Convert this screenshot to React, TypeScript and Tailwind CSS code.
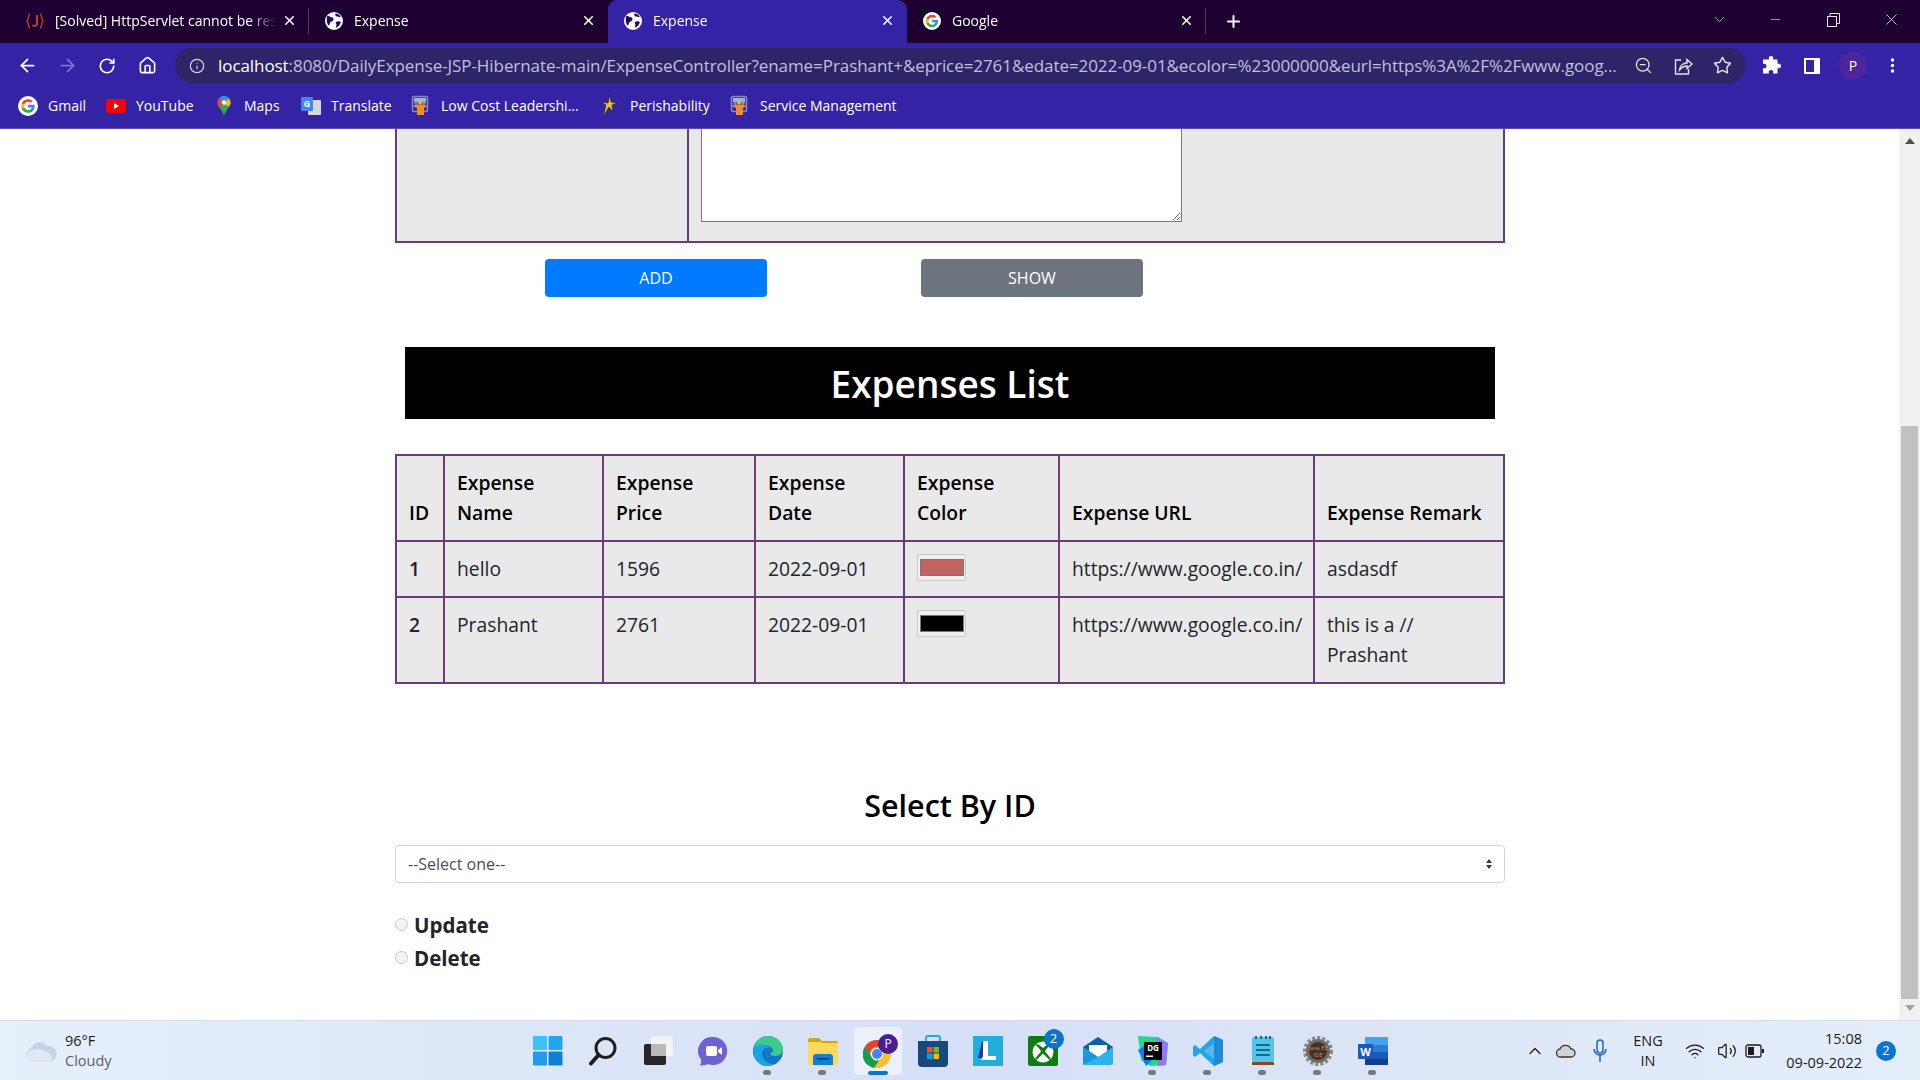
import { ArrowLeft, ArrowRight, ChevronDown, ChevronUp, Home, Info, Minus, MoreVertical, Plus, RotateCw, Star, Volume2, Wifi, X, ZoomOut } from "lucide-react";
import type { ReactNode } from "react";

const GoogleG = ({ size = 20 }: { size?: number }) => (
  <svg width={size} height={size} viewBox="0 0 24 24" className="shrink-0">
    <circle cx="12" cy="12" r="12" fill="#fff" />
    <path d="M20 12.2c0-.6-.05-1.1-.15-1.6H12v3.1h4.5c-.2 1-.8 1.9-1.7 2.5v2h2.7c1.6-1.5 2.5-3.6 2.5-6z" fill="#4285F4" />
    <path d="M12 20.2c2.2 0 4.1-.7 5.5-2l-2.7-2c-.8.5-1.7.8-2.8.8-2.1 0-3.9-1.4-4.6-3.4H4.6v2.1C6 18.5 8.8 20.2 12 20.2z" fill="#34A853" />
    <path d="M7.4 13.6c-.35-1-.35-2.2 0-3.2V8.3H4.6c-1 1.9-1 5.5 0 7.4z" fill="#FBBC05" />
    <path d="M12 7c1.2 0 2.3.4 3.1 1.2l2.4-2.4C16.1 4.5 14.2 3.8 12 3.8c-3.2 0-6 1.8-7.4 4.5l2.8 2.1C8.1 8.4 9.900 7 12 7z" fill="#EA4335" />
  </svg>
);

const Globe = () => (
  <svg width="18" height="18" viewBox="0 0 24 24" className="shrink-0">
    <circle cx="12" cy="12" r="12" fill="#fff" />
    <path d="M3 5c3 0 4 2 6 2s3 2 2 4-3 1-4 3-1 4-2 4-4-6-2-13zM14 2c3 0 6 2 7 4-2 2-3 0-5 0s-3-3-2-4zM15 13c2-1 5-1 6 0 0 3-3 7-6 8-1-2 1-3 0-5s-1-2 0-3z" fill="#1f0b52" />
  </svg>
);

const JFavicon = () => (
  <svg width="18" height="18" viewBox="0 0 18 18" className="shrink-0" fill="none" stroke="#c0392b" strokeWidth="1.4">
    <path d="M4 2C2 2 3 7 1 9c2 2 1 7 3 7M14 2c2 0 1 5 3 7-2 2-1 7-3 7" />
    <path d="M11 3v9c0 2-3 2.500-4.500 1" strokeWidth="2" />
  </svg>
);

const PersonBadge = () => (
  <svg width="18" height="22" viewBox="0 0 18 22" className="shrink-0">
    <rect x="1.500" y="1.500" width="15" height="15" rx="1.500" fill="none" stroke="#7f8fc0" strokeWidth="1.500" />
    <rect x="3" y="3" width="12" height="4" fill="#9db4dd" />
    <circle cx="5" cy="8" r="1.700" fill="#3d9be9" />
    <circle cx="13" cy="8" r="1.700" fill="#6cc04a" />
    <path d="M1.500 11l3.500-1.500h8L16.500 11l-3.500 2v7H6v-7z" fill="#f28c28" />
    <circle cx="9" cy="7.500" r="2" fill="#f5b041" />
  </svg>
);

const tabs = [
  { title: "[Solved] HttpServlet cannot be resolved", icon: <JFavicon />, active: false, sep: true, cls: "w-[299px]" },
  { title: "Expense", icon: <Globe />, active: false, sep: false, cls: "w-[299px]" },
  { title: "Expense", icon: <Globe />, active: true, sep: false, cls: "w-[299px]" },
  { title: "Google", icon: <GoogleG size={18} />, active: false, sep: true, cls: "w-[299px]" },
];

const bookmarks: { label: string; cls: string; icon: ReactNode }[] = [
  { label: "Gmail", cls: "w-[88px] gap-[10px]", icon: <GoogleG size={20} /> },
  {
    label: "YouTube",
    cls: "w-[108px] gap-[10px]",
    icon: (
      <svg width="20" height="14" viewBox="0 0 20 14" className="shrink-0">
        <rect width="20" height="14" rx="3" fill="#f00" />
        <path d="M8 4l5 3-5 3z" fill="#fff" />
      </svg>
    ),
  },
  {
    label: "Maps",
    cls: "w-[87px] gap-[10px]",
    icon: (
      <svg width="20" height="20" viewBox="0 0 20 20" className="shrink-0">
        <path d="M10 0a6.500 6.500 0 0 1 6.500 6.500c0 4-4.500 7-6.500 13.500C8 13.500 3.500 10.500 3.500 6.500A6.500 6.500 0 0 1 10 0z" fill="#34a853" />
        <path d="M10 0c2 0 3.700.9 4.900 2.300L10 8 5.200 2.200A6.500 6.500 0 0 1 10 0z" fill="#4285f4" />
        <path d="M5.200 2.200L10 8l-5.600 2.500C3.800 9.400 3.500 8 3.500 6.500c0-1.700.6-3.200 1.700-4.300z" fill="#ea4335" />
        <path d="M14.900 2.300a6.500 6.500 0 0 1 1.600 4.200c0 1.400-.5 2.700-1.300 4L10 8z" fill="#fbbc05" />
        <circle cx="10" cy="6.500" r="2.300" fill="#fff" />
      </svg>
    ),
  },
  {
    label: "Translate",
    cls: "w-[108px] gap-[10px]",
    icon: (
      <svg width="20" height="20" viewBox="0 0 20 20" className="shrink-0">
        <rect x="7" y="4" width="13" height="15" rx="1" fill="#d8d8d8" />
        <rect x="0" y="1" width="12" height="14" rx="1" fill="#4285f4" />
        <text x="6" y="11" fontSize="9" fontWeight="700" fill="#fff" textAnchor="middle">G</text>
      </svg>
    ),
  },
  { label: "Low Cost Leadershi...", cls: "w-[189px] gap-[12px] pl-[2px]", icon: <PersonBadge /> },
  {
    label: "Perishability",
    cls: "w-[130px] gap-[12px] pl-[2px]",
    icon: (
      <svg width="18" height="22" viewBox="0 0 18 22" className="shrink-0">
        <path d="M10 0l1 7 6 1-5 2 1 7-4-5-6 10 3-12-5-3 7 1z" fill="#e8c12f" stroke="#1b1b1b" strokeWidth=".6" />
      </svg>
    ),
  },
  { label: "Service Management", cls: "w-[180px] gap-[12px] pl-[2px]", icon: <PersonBadge /> },
];

const apps: { key: string; dot: boolean; icon: ReactNode; active?: boolean }[] = [
  {
    key: "start",
    dot: false,
    icon: (
      <svg width="30" height="30" viewBox="0 0 30 30">
        <rect x="0" y="0" width="14" height="14" rx="1" fill="#3cc2f5" />
        <rect x="15.500" y="0" width="14" height="14" rx="1" fill="#22a7ee" />
        <rect x="0" y="15.500" width="14" height="14" rx="1" fill="#1f9de8" />
        <rect x="15.500" y="15.500" width="14" height="14" rx="1" fill="#0f7fd6" />
      </svg>
    ),
  },
  {
    key: "search",
    dot: false,
    icon: (
      <svg width="30" height="30" viewBox="0 0 30 30" fill="none" stroke="#1f1f1f">
        <circle cx="17.500" cy="12" r="9.500" strokeWidth="3" />
        <path d="M10.500 19L3 27.500" strokeWidth="4" strokeLinecap="round" />
      </svg>
    ),
  },
  {
    key: "view",
    dot: false,
    icon: (
      <svg width="30" height="30" viewBox="0 0 30 30">
        <rect x="1" y="8" width="22" height="21" rx="2" fill="#262626" />
        <rect x="8" y="0" width="22" height="20" rx="2" fill="#f4f4f4" fillOpacity=".9" />
        <rect x="8" y="8" width="15" height="12" fill="#b9b9b9" />
      </svg>
    ),
  },
  {
    key: "chat",
    dot: false,
    icon: (
      <svg width="30" height="30" viewBox="0 0 30 30">
        <path d="M15 1a14 14 0 1 1-5 27c-2 1.500-5 1.500-8 1.500 1-1.500 1.500-3 1-6A14 14 0 0 1 15 1z" fill="#6d62cf" />
        <rect x="8" y="10" width="11" height="10" rx="2" fill="#fff" />
        <path d="M20 14l4-3v8l-4-3z" fill="#fff" />
      </svg>
    ),
  },
  {
    key: "edge",
    dot: true,
    icon: (
      <svg width="30" height="30" viewBox="0 0 30 30">
        <circle cx="15" cy="15" r="15" fill="#0f78c9" />
        <path d="M1 12C3 4 9 0 15 0c9 0 15 7 15 13 0 5-4 7-8 7-3 0-5-1-5-3 3 0 4-2 2-5-3-4-12-4-18 0z" fill="#3ccb8b" />
        <path d="M1 12c5-5 13-4 16 0-3-1-8 0-8 6 0 5 5 10 12 10-3 2-6 2-8 2C6 30 0 22 1 12z" fill="#1aa4e3" />
      </svg>
    ),
  },
  {
    key: "files",
    dot: true,
    icon: (
      <svg width="30" height="28" viewBox="0 0 30 28">
        <path d="M0 3a2 2 0 0 1 2-2h9l3 3h14a2 2 0 0 1 2 2v4H0z" fill="#d8a312" />
        <path d="M0 5h12l3 1h15v20a2 2 0 0 1-2 2H2a2 2 0 0 1-2-2z" fill="#ffd95c" />
        <path d="M5 28v-8a3 3 0 0 1 3-3h14a3 3 0 0 1 3 3v8z" fill="#0f7fd6" />
        <rect x="9" y="21" width="12" height="1.500" fill="#063e73" />
      </svg>
    ),
  },
  {
    key: "chrome",
    dot: false,
    active: true,
    icon: (
      <svg width="36" height="36" viewBox="0 0 36 36" className="relative ml-[6px]">
        <circle cx="14" cy="21" r="14" fill="#fbc02d" />
        <path d="M14 7a14 14 0 0 1 12 7H14a7 7 0 0 0-6.500 9.500L2 13.500A14 14 0 0 1 14 7z" fill="#db4437" />
        <path d="M2 13.500l6 10a7 7 0 0 0 8 4L11 35A14 14 0 0 1 2 13.500z" fill="#0f9d58" />
        <circle cx="14" cy="21" r="6" fill="#fff" />
        <circle cx="14" cy="21" r="5" fill="#4285f4" />
        <circle cx="25" cy="11" r="10" fill="#48208f" />
        <text x="25" y="15" fontSize="12" fill="#fff" textAnchor="middle" fontFamily="Open Sans">P</text>
      </svg>
    ),
  },
  {
    key: "store",
    dot: false,
    icon: (
      <svg width="30" height="32" viewBox="0 0 30 32">
        <path d="M8 6V3a2 2 0 0 1 2-2h10a2 2 0 0 1 2 2v3" fill="none" stroke="#2aa4e8" strokeWidth="2" />
        <path d="M0 6h30v22a4 4 0 0 1-4 4H4a4 4 0 0 1-4-4z" fill="#17497e" />
        <rect x="9" y="12" width="5.500" height="5.500" fill="#f25022" />
        <rect x="15.500" y="12" width="5.500" height="5.500" fill="#7fba00" />
        <rect x="9" y="18.500" width="5.500" height="5.500" fill="#00a4ef" />
        <rect x="15.500" y="18.500" width="5.500" height="5.500" fill="#ffb900" />
      </svg>
    ),
  },
  {
    key: "l",
    dot: false,
    icon: (
      <svg width="30" height="30" viewBox="0 0 30 30">
        <rect width="30" height="30" fill="#22aeda" />
        <path d="M9 5h5l-4 17h-5z" fill="#1a3d9c" />
        <path d="M10 5h5v15h8v4H8l2-4z" fill="#fff" />
      </svg>
    ),
  },
  {
    key: "xbox",
    dot: false,
    icon: (
      <div className="relative h-[30px] w-[30px]">
        <svg width="30" height="30" viewBox="0 0 30 30">
          <rect width="30" height="30" rx="2" fill="#107c10" />
          <circle cx="15" cy="16" r="10.500" fill="#fff" />
          <path d="M15 12c-3-3-6-4.500-8-3.500 3 2 5 5 6 7-3 3-6 7-6 9 1 .5 5-4 8-7 3 3 7 7.500 8 7 0-2-3-6-6-9 1-2 3-5 6-7-2-1-5 .5-8 3.500z" fill="#107c10" />
        </svg>
        <span className="absolute -right-[6px] -top-[7px] flex h-[20px] w-[20px] items-center justify-center rounded-full bg-[#0a74d2] text-[13px] text-white">2</span>
      </div>
    ),
  },
  {
    key: "mail",
    dot: false,
    icon: (
      <svg width="30" height="28" viewBox="0 0 30 28">
        <path d="M0 10L15 0l15 10v4H0z" fill="#0d5fa8" />
        <path d="M6 8h18v12H6z" fill="#fff" />
        <path d="M0 10l15 10 15-10v16a2 2 0 0 1-2 2H2a2 2 0 0 1-2-2z" fill="#2db4ee" />
        <path d="M0 10l15 10L0 28z" fill="#1a97dd" />
      </svg>
    ),
  },
  {
    key: "dg",
    dot: true,
    icon: (
      <svg width="30" height="30" viewBox="0 0 30 30">
        <path d="M0 0l20 1 10 6-2 22-16 1-9-6z" fill="#22d88f" />
        <path d="M18 1l12 6-2 22-8 1z" fill="#9775f8" />
        <path d="M0 14l8 16 6-6-8-14z" fill="#087cfa" />
        <rect x="6" y="6" width="18" height="18" fill="#000" />
        <text x="15" y="14.500" fontSize="8" fontWeight="700" fill="#fff" textAnchor="middle" fontFamily="Open Sans">DG</text>
        <rect x="8" y="19.500" width="7" height="1.500" fill="#fff" />
      </svg>
    ),
  },
  {
    key: "code",
    dot: true,
    icon: (
      <svg width="30" height="30" viewBox="0 0 30 30">
        <path d="M21 0l9 4v22l-9 4-14-13-5 4-2-1.500V10.500L2 9l5 4z" fill="#23a3e8" />
        <path d="M21 0v30l9-4V4z" fill="#1d8ad6" />
        <path d="M21 7.500L10.500 15 21 22.500z" fill="#eaf2fb" fillOpacity=".25" />
      </svg>
    ),
  },
  {
    key: "notes",
    dot: true,
    icon: (
      <svg width="22" height="30" viewBox="0 0 22 30">
        <rect x="0" y="1" width="22" height="25" rx="2" fill="#56c4e8" />
        <rect x="0" y="26" width="22" height="3" fill="#8a4a1c" />
        <path d="M4 9h14M4 14h14M4 19h14" stroke="#0d6f94" strokeWidth="2" />
        <path d="M4 0v3M9 0v3M14 0v3M18 0v3" stroke="#0d6f94" strokeWidth="2" />
      </svg>
    ),
  },
  {
    key: "java",
    dot: true,
    icon: (
      <svg width="30" height="30" viewBox="0 0 30 30">
        <circle cx="15" cy="15" r="13" fill="none" stroke="#888" strokeWidth="4" strokeDasharray="3 2" />
        <circle cx="15" cy="15" r="12" fill="#6f6a66" />
        <circle cx="15" cy="15" r="9" fill="#3c332e" />
        <text x="15" y="14" fontSize="6" fill="#e8862a" textAnchor="middle" fontFamily="Open Sans">Java EE</text>
        <text x="15" y="21" fontSize="6" fill="#e8862a" textAnchor="middle" fontFamily="Open Sans">IDE</text>
      </svg>
    ),
  },
  {
    key: "word",
    dot: true,
    icon: (
      <svg width="30" height="28" viewBox="0 0 30 28">
        <rect x="7" y="0" width="23" height="8" fill="#41a5ee" />
        <rect x="7" y="8" width="23" height="7" fill="#2b7cd3" />
        <rect x="7" y="15" width="23" height="7" fill="#185abd" />
        <rect x="7" y="22" width="23" height="6" fill="#103f91" />
        <rect x="0" y="7" width="15" height="15" rx="1" fill="#185abd" />
        <text x="7.500" y="18.500" fontSize="11" fontWeight="700" fill="#fff" textAnchor="middle" fontFamily="Open Sans">W</text>
      </svg>
    ),
  },
];

const headers = [
  { label: ["ID"], cls: "w-[48px]" },
  { label: ["Expense", "Name"], cls: "w-[159px]" },
  { label: ["Expense", "Price"], cls: "w-[152px]" },
  { label: ["Expense", "Date"], cls: "w-[149px]" },
  { label: ["Expense", "Color"], cls: "w-[155px]" },
  { label: ["Expense URL"], cls: "w-[255px]" },
  { label: ["Expense Remark"], cls: "w-[190px]" },
];

const rows = [
  { id: 1, name: "hello", price: 1596, date: "2022-09-01", swatch: "bg-[#c46262]", remark: ["asdasdf"] },
  { id: 2, name: "Prashant", price: 2761, date: "2022-09-01", swatch: "bg-black", remark: ["this is a //", "Prashant"] },
];

const thCls = "border-2 border-[#6c3a7e] bg-[#e9e9e9] px-[12px] py-[12px] text-left align-bottom font-semibold";
const tdCls = "border-2 border-[#6c3a7e] bg-[#e9e9e9] px-[12px] py-[12px] text-left align-top font-normal text-[#212529]";

function TabStrip() {
  return (
    <div className="flex h-[43px] items-end bg-[#1e0132] pl-[10px] text-white">
      {tabs.map((t, i) => (
        <div
          key={i}
          className={`flex h-[43px] items-center pb-[2px] pl-[16px] pr-[12px] text-[14px] ${t.cls} ${t.active ? "rounded-t-[9px] bg-[#3523a6]" : ""}`}
        >
          {t.icon}
          <span className="ml-[11px] min-w-0 flex-1 overflow-hidden whitespace-nowrap [mask-image:linear-gradient(to_right,black_88%,transparent)]">{t.title}</span>
          <X size={15} strokeWidth={2.5} className="ml-[6px] shrink-0" />
          {t.sep && <span className="-mr-[12px] ml-[11px] h-[26px] w-px shrink-0 bg-[#4d3a5e]" />}
        </div>
      ))}
      <div className="flex h-[43px] items-center pb-[1px] pl-[18px]">
        <Plus size={19} strokeWidth={2.5} />
      </div>
      <div className="ml-auto flex h-[43px] items-center pb-[4px] text-[#e6e0ea]">
        <ChevronDown size={17} strokeWidth={1} className="mr-[40px]" />
        <Minus size={15} strokeWidth={1} className="mr-[43px]" />
        <svg width="14" height="14" viewBox="0 0 14 14" fill="none" stroke="currentColor" className="mr-[42px]">
          <rect x="1.500" y="3.500" width="9" height="10" />
          <path d="M4 3V.5h9.500v10H11" />
        </svg>
        <X size={19} strokeWidth={1} className="mr-[19px]" />
      </div>
    </div>
  );
}

function ToolBar() {
  return (
    <div className="flex h-[52px] items-center bg-[#3523a6] pb-[7px] pl-[7px] text-white">
      <div className="flex w-[40px] justify-center"><ArrowLeft size={21} strokeWidth={2} /></div>
      <div className="flex w-[40px] justify-center text-[#7f74c7]"><ArrowRight size={21} strokeWidth={2} /></div>
      <div className="flex w-[40px] justify-center"><RotateCw size={18} strokeWidth={2.2} /></div>
      <div className="flex w-[40px] justify-center"><Home size={19} strokeWidth={2} /></div>
      <div className="ml-[8px] flex h-[35px] w-[1571px] items-center rounded-full bg-[#2d2568] pl-[14px] pr-[14px]">
        <Info size={16} strokeWidth={1.8} className="shrink-0 text-[#d5d2e8]" />
        <div className="ml-[13px] flex-1 overflow-hidden whitespace-nowrap text-[17px] tracking-[-0.07px] text-[#c3bfdd]">
          <span className="text-white">localhost</span>:8080/DailyExpense-JSP-Hibernate-main/ExpenseController?ename=Prashant+&amp;eprice=2761&amp;edate=2022-09-01&amp;ecolor=%23000000&amp;eurl=https%3A%2F%2Fwww.goog...
        </div>
        <ZoomOut size={19} strokeWidth={1.6} className="ml-[14px] shrink-0 text-[#e6e4f2]" />
        <svg width="20" height="20" viewBox="0 0 20 20" fill="none" stroke="#e6e4f2" strokeWidth="1.400" className="ml-[20px] shrink-0">
          <path d="M8 4H2.500v14h13v-5" />
          <path d="M6.500 14c.5-4 3.500-7 7.500-7V3.500L19 8l-5 4.500V10c-3 0-5.500 1.500-7.500 4z" />
        </svg>
        <Star size={19} strokeWidth={1.8} className="ml-[20px] shrink-0 text-[#e6e4f2]" />
      </div>
      <svg width="20" height="20" viewBox="0 0 20 20" fill="#fff" className="ml-[15px]">
        <path d="M8 1a2.500 2.500 0 0 1 4 0c.5.8.3 1.500 0 2.500h4.500V8c1-.3 1.800-.5 2.500 0a2.500 2.500 0 0 1 0 4c-.7.5-1.500.3-2.500 0v5.500H12c.3-1 .5-1.800 0-2.500a2.500 2.500 0 0 0-4 0c-.5.7-.3 1.500 0 2.500H2V12c1 .3 1.800.5 2.500 0a2.500 2.500 0 0 0 0-4C3.800 7.500 3 7.700 2 8V3.500h6C8.300 2.500 7.500 1.800 8 1z" />
      </svg>
      <svg width="18" height="18" viewBox="0 0 18 18" className="ml-[22px]">
        <rect x="1" y="1" width="16" height="16" fill="#fff" />
        <rect x="3" y="3" width="8" height="12" fill="#3523a6" />
      </svg>
      <div className="ml-[18px] flex h-[28px] w-[28px] items-center justify-center rounded-full bg-[#4d269c] text-[14px]">P</div>
      <MoreVertical size={19} strokeWidth={2.4} className="ml-[16px]" />
    </div>
  );
}

function BookmarkBar() {
  return (
    <div className="flex h-[34px] items-start border-b border-[#5a49c0] bg-[#3523a6] pl-[18px] text-white">
      {bookmarks.map((b) => (
        <div key={b.label} className={`flex h-[21px] items-center text-[14px] ${b.cls}`}>
          {b.icon}
          <span className="whitespace-nowrap">{b.label}</span>
        </div>
      ))}
    </div>
  );
}

function PageBody() {
  return (
    <div className="ml-[395px] w-[1110px] text-[19.3px] leading-[30px] text-black">
      <div className="flex h-[114px] border-x-2 border-b-2 border-[#6c3a7e] bg-[#e9e9e9]">
        <div className="w-[292px] border-r-2 border-[#6c3a7e]" />
        <div className="h-[93px] flex-1 overflow-hidden pl-[12px]">
          <textarea readOnly className="-mt-[10px] block h-[103px] w-[481px] border border-[#767676] bg-white" />
        </div>
      </div>

      <div className="mt-[16px] flex text-[16px] text-white">
        <button className="ml-[150px] h-[38px] w-[222px] rounded-[4px] bg-[#007bff]">ADD</button>
        <button className="ml-[154px] h-[38px] w-[222px] rounded-[4px] bg-[#6c757d]">SHOW</button>
      </div>

      <h2 className="ml-[10px] mt-[50px] flex h-[72px] w-[1090px] items-center justify-center bg-black text-[37px] font-semibold leading-none text-white">Expenses List</h2>

      <table className="mt-[35px] w-[1108px] table-fixed border-collapse">
        <thead>
          <tr>
            {headers.map((h) => (
              <th key={h.label.join()} className={`${thCls} ${h.cls}`}>
                {h.label.map((l) => (
                  <div key={l} className="whitespace-nowrap">{l}</div>
                ))}
              </th>
            ))}
          </tr>
        </thead>
        <tbody>
          {rows.map((r) => (
            <tr key={r.id}>
              <td className={`${tdCls} font-semibold`}>{r.id}</td>
              <td className={tdCls}>{r.name}</td>
              <td className={tdCls}>{r.price}</td>
              <td className={tdCls}>{r.date}</td>
              <td className={tdCls}>
                <div className="flex h-[27px] w-[49px] items-center justify-center rounded-[2px] border border-[#c9c9c9] bg-[#efefef]">
                  <div className={`h-[17px] w-[44px] border border-[#777] ${r.swatch}`} />
                </div>
              </td>
              <td className={`${tdCls} whitespace-nowrap`}>https://www.google.co.in/</td>
              <td className={tdCls}>
                {r.remark.map((l) => (
                  <div key={l} className="whitespace-nowrap">{l}</div>
                ))}
              </td>
            </tr>
          ))}
        </tbody>
      </table>

      <h3 className="mt-[101px] h-[40px] text-center text-[30.5px] font-semibold leading-[40px]">Select By ID</h3>

      <div className="mt-[20px] flex h-[38px] items-center justify-between rounded-[4px] border border-[#ced4da] pl-[12px] pr-[11px] text-[16px] text-[#495057]">
        <span>--Select one--</span>
        <svg width="8" height="12" viewBox="0 0 8 12" fill="#343a40">
          <path d="M4 1l3 4H1zM4 11L1 7h6z" />
        </svg>
      </div>

      <div className="mt-[25px] flex h-[33px] items-center gap-[6px] text-[20.5px] font-bold text-[#212529]">
        <span className="h-[13px] w-[13px] rounded-full border border-[#c9c9c9] bg-[#f3f3f3]" />
        Update
      </div>
      <div className="flex h-[33px] items-center gap-[6px] text-[20.5px] font-bold text-[#212529]">
        <span className="h-[13px] w-[13px] rounded-full border border-[#c9c9c9] bg-[#f3f3f3]" />
        Delete
      </div>
    </div>
  );
}

function ScrollBar() {
  return (
    <div className="flex w-[21px] flex-col items-center bg-[#f1f1f1]">
      <svg width="10" height="6" viewBox="0 0 10 6" className="mt-[9px]" fill="#505050"><path d="M5 0l5 6H0z" /></svg>
      <div className="mt-[282px] h-[573px] w-[17px] bg-[#c1c1c1]" />
      <svg width="10" height="6" viewBox="0 0 10 6" className="mt-[6px]" fill="#a3a3a3"><path d="M5 6L0 0h10z" /></svg>
    </div>
  );
}

function TaskBar() {
  return (
    <div className="flex h-[60px] items-center border-t border-[#d5dcea] bg-gradient-to-r from-[#e6f0fa] via-[#d6dff6] to-[#e4eef9] text-[#1b1b1b]">
      <div className="flex w-[520px] items-center pl-[25px]">
        <svg width="32" height="22" viewBox="0 0 32 22">
          <path d="M8 22a7 7 0 0 1-2-13.500A9 9 0 0 1 22 6a8 8 0 0 1 3 16z" fill="#c4d3e8" />
          <path d="M8 22a6 6 0 0 1-1-12c6-2 14 0 18 4a5 5 0 0 1 0 8z" fill="#dfe8f4" />
        </svg>
        <div className="ml-[8px] text-[14.5px] leading-[20px]">
          <div>96°F</div>
          <div className="text-[#5b5f66]">Cloudy</div>
        </div>
      </div>

      <div className="flex">
        {apps.map((a) => (
          <div key={a.key} className="relative flex h-[48px] w-[55px] items-center justify-center">
            {a.active && <span className="absolute inset-y-0 left-[4px] w-[48px] rounded-[4px] bg-[#ebf0fb]" />}
            {a.icon}
            {a.dot && <span className="absolute bottom-0 left-[23px] h-[5px] w-[8px] rounded-full bg-[#77797f]" />}
            {a.active && <span className="absolute bottom-0 left-[18px] h-[4px] w-[20px] rounded-full bg-[#0a74d2]" />}
          </div>
        ))}
      </div>

      <div className="ml-[125px] flex items-center">
        <ChevronUp size={20} strokeWidth={1.5} />
        <svg width="20" height="15" viewBox="0 0 20 15" className="ml-[11px]">
          <path d="M5 14a4 4 0 0 1-1-8 6 6 0 0 1 11 0 4 4 0 0 1 0 8z" fill="#d2d3d4" stroke="#333" strokeWidth="1.300" />
        </svg>
        <svg width="14" height="24" viewBox="0 0 14 24" fill="none" stroke="#1b64c4" strokeWidth="1.500" className="ml-[17px]">
          <rect x="4" y="1" width="6" height="13" rx="3" />
          <path d="M1 10a6 6 0 0 0 12 0M7 16v7" />
        </svg>
        <div className="ml-[21px] w-[40px] text-center text-[14.5px] leading-[20px]">
          <div>ENG</div>
          <div>IN</div>
        </div>
        <Wifi size={20} strokeWidth={1.6} className="ml-[17px]" />
        <Volume2 size={20} strokeWidth={1.5} className="ml-[12px]" />
        <svg width="20" height="14" viewBox="0 0 20 14" fill="none" stroke="#1b1b1b" strokeWidth="1.300" className="ml-[8px]">
          <rect x="1" y="1" width="15" height="12" rx="2" />
          <rect x="3" y="3" width="6" height="8" fill="#1b1b1b" stroke="none" />
          <path d="M18 5v4" strokeWidth="2" />
        </svg>
        <div className="ml-[17px] w-[80px] text-right text-[14.5px] leading-[24px]">
          <div>15:08</div>
          <div>09-09-2022</div>
        </div>
        <div className="ml-[14px] flex h-[20px] w-[20px] items-center justify-center rounded-full bg-[#0a74d2] text-[13px] text-white">2</div>
      </div>
    </div>
  );
}

export default function App() {
  return (
    <div className="flex h-[1080px] w-[1920px] flex-col overflow-hidden bg-white font-['Open_Sans',sans-serif]">
      <TabStrip />
      <ToolBar />
      <BookmarkBar />
      <div className="flex min-h-0 flex-1">
        <div className="min-w-0 flex-1 overflow-hidden">
          <PageBody />
        </div>
        <ScrollBar />
      </div>
      <TaskBar />
    </div>
  );
}
